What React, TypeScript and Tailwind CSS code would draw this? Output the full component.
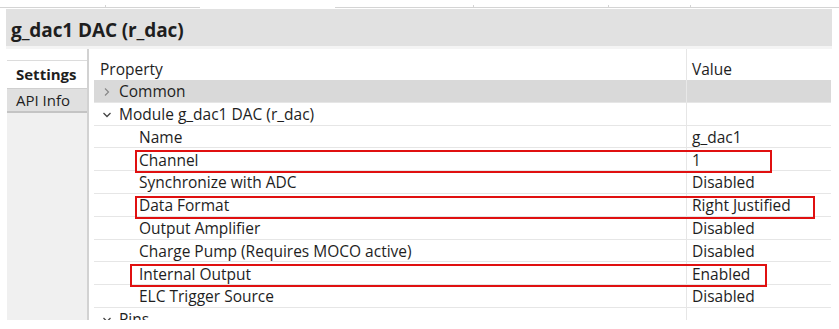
import React from "react";

const rows: { label: string; value: string; indent: number; kind?: "open" | "closed"; bg?: string }[] = [
  { label: "Common", value: "", indent: 0, kind: "closed", bg: "bg-[#d9d9d9]" },
  { label: "Module g_dac1 DAC (r_dac)", value: "", indent: 0, kind: "open" },
  { label: "Name", value: "g_dac1", indent: 1 },
  { label: "Channel", value: "1", indent: 1 },
  { label: "Synchronize with ADC", value: "Disabled", indent: 1 },
  { label: "Data Format", value: "Right Justified", indent: 1 },
  { label: "Output Amplifier", value: "Disabled", indent: 1 },
  { label: "Charge Pump (Requires MOCO active)", value: "Disabled", indent: 1 },
  { label: "Internal Output", value: "Enabled", indent: 1 },
  { label: "ELC Trigger Source", value: "Disabled", indent: 1 },
  { label: "Pins", value: "", indent: 0, kind: "open" },
];

function Chevron({ open }: { open: boolean }) {
  return open ? (
    <svg width="10" height="10" viewBox="0 0 10 10" className="mr-[7px] shrink-0">
      <path d="M1.5 3 L5 6.5 L8.5 3" fill="none" stroke="#444" strokeWidth="1.3" />
    </svg>
  ) : (
    <svg width="10" height="10" viewBox="0 0 10 10" className="mr-[7px] shrink-0">
      <path d="M3 1.5 L6.5 5 L3 8.5" fill="none" stroke="#888" strokeWidth="1.2" />
    </svg>
  );
}

export default function App() {
  return (
    <div
      className="relative w-[839px] h-[329px] bg-white overflow-hidden text-[#1e1e1e]"
      style={{ fontFamily: '"Open Sans", "Noto Sans", sans-serif' }}
    >
      {/* top strip */}
      <div className="h-[9px] relative">
        <div className="absolute top-[7px] left-0 w-[200px] h-px bg-[#d4d4d4]" />
        <div className="absolute top-[7px] left-[335px] right-0 h-px bg-[#d4d4d4]" />
        <div className="absolute top-[5px] left-[105px] w-px h-[3px] bg-[#d4d4d4]" />
        <div className="absolute top-[5px] left-[473px] w-px h-[3px] bg-[#d4d4d4]" />
        <div className="absolute top-[5px] left-[608px] w-px h-[3px] bg-[#d4d4d4]" />
        <div className="absolute top-[5px] left-[690px] w-px h-[3px] bg-[#d4d4d4]" />
      </div>
      {/* header band */}
      <div className="ml-[6px] mr-[7px] h-[37px] bg-[#e1e1e1] flex items-center pl-[5px] pt-[6px]">
        <span className="text-[19px] font-bold tracking-[-0.1px]">g_dac1 DAC (r_dac)</span>
      </div>
      <div className="ml-[6px] mr-[7px] h-[3px] bg-[#f4f4f4]" />

      {/* body */}
      <div className="flex h-[271px] pl-[7px]">
        {/* left tabs */}
        <div className="w-[82px] flex flex-col border-r-2 border-[#d2d2d2] bg-[#f0f0f0]">
          <div className="h-[12px] bg-white border-b border-[#dcdcdc]" />
          <div className="h-[27px] bg-white flex items-center pl-[9px] text-[15px] font-bold">Settings</div>
          <div className="h-[25px] bg-[#e0e0e0] border-t border-[#cfcfcf] border-b-2 border-b-[#c4c4c4] flex items-center pl-[9px] text-[15px]">
            API Info
          </div>
          <div className="flex-1 bg-[#f0f0f0]" />
        </div>

        {/* table */}
        <div className="ml-[5px] w-[737px] flex flex-col overflow-hidden">
          <div className="h-[31px] flex text-[15.5px] shrink-0">
            <div className="w-[592px] pl-[6px] pt-[9px]">Property</div>
            <div className="flex-1 border-l border-[#e6e6e6] pl-[5px] pt-[9px]">Value</div>
          </div>
          {rows.map((r, i) => (
            <div
              key={i}
              className={`h-[22.8px] shrink-0 flex text-[15.5px] border-b border-[#e6e6e6] ${r.bg ?? "bg-white"}`}
            >
              <div
                className={`w-[592px] flex items-center pt-[2px] whitespace-nowrap ${r.indent ? "pl-[45px]" : "pl-[8px]"}`}
              >
                {r.kind && <Chevron open={r.kind === "open"} />}
                <span>{r.label}</span>
              </div>
              <div className={`flex-1 flex items-center pt-[2px] whitespace-nowrap border-l ${r.bg ? "border-[#e8e8e8]" : "border-[#e6e6e6]"} pl-[5px]`}>
                {r.value}
              </div>
            </div>
          ))}
        </div>
      </div>

      {/* red highlight boxes */}
      <div className="absolute left-[135px] top-[150px] w-[637px] h-[23px] border-2 border-[#e01010]" />
      <div className="absolute left-[135px] top-[196px] w-[680px] h-[23px] border-2 border-[#e01010]" />
      <div className="absolute left-[130px] top-[264px] w-[637px] h-[23px] border-2 border-[#e01010]" />
    </div>
  );
}
